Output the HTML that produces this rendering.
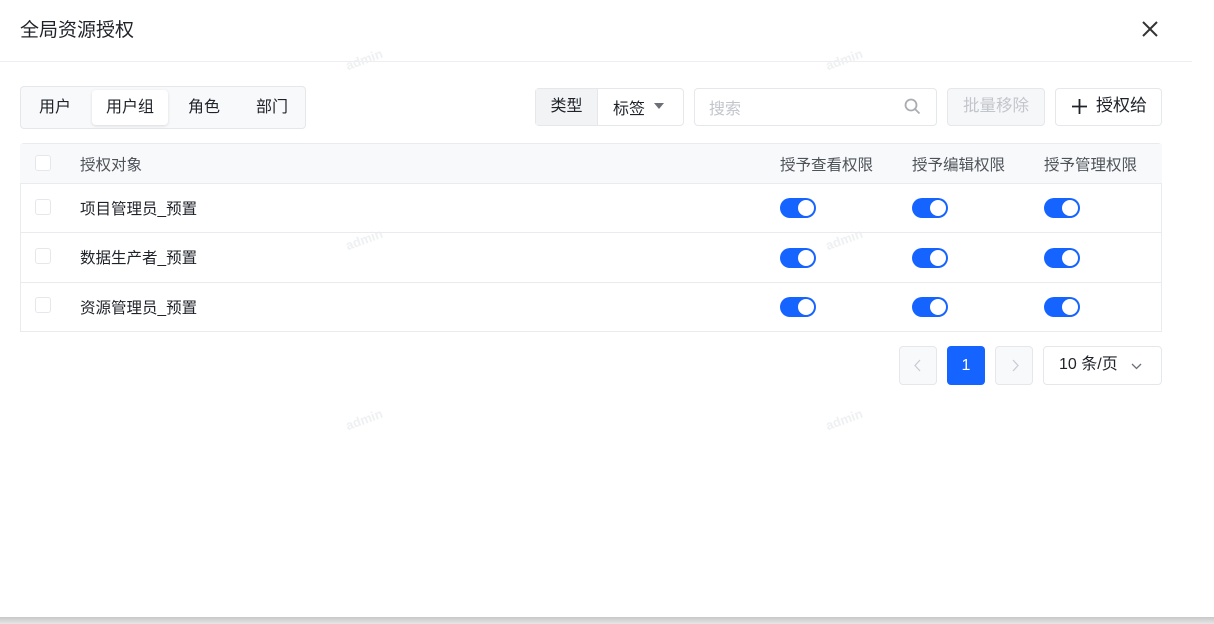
<!DOCTYPE html>
<html><head><meta charset="utf-8"><style>
*{box-sizing:border-box;margin:0;padding:0}
body{width:1214px;height:624px;background:#fff;font-family:"Liberation Sans","Noto Sans CJK SC",sans-serif;color:#1f2329;position:relative;overflow:hidden;font-size:14px}
.abs{position:absolute}
.title{left:20px;top:15px;font-size:19px;color:#1f2329}
.hline{left:0;top:61px;width:1192px;height:1px;background:#eceef1}
.wm{font-size:13px;color:#eef0f2;transform:rotate(-20deg);font-weight:bold}
.seg{left:20px;top:86px;width:286px;height:43px;border:1px solid #e5e7eb;border-radius:4px;background:#f8f9fb}
.seg span{position:absolute;top:6px;font-size:16px;color:#1f2329}
.seg .act{top:3px;left:71px;width:76px;height:35px;background:#fff;border-radius:4px;box-shadow:0 1px 3px rgba(0,0,0,.12);text-align:center;line-height:35px}
.box{border:1px solid #e5e7eb;border-radius:4px;background:#fff}
.tog{width:36px;height:20px;border-radius:10px;background:#1664ff;position:absolute}
.tog:after{content:"";position:absolute;right:2px;top:2px;width:16px;height:16px;border-radius:50%;background:#fff}
.cb{position:absolute;left:15px;width:16px;height:16px;border:1px solid #e5e7eb;border-radius:3px;background:#fff}
.row{position:absolute;left:20px;width:1142px;border-bottom:1px solid #e9ebef}
.row .t{position:absolute;left:60px;font-size:15.5px}
.h{position:absolute;top:9px;font-size:15.5px;color:#4e5358}
</style></head><body>
<div class="abs title">全局资源授权</div>
<svg class="abs" style="left:1141px;top:20px" width="18" height="18" viewBox="0 0 18 18"><path d="M2 2L16 16M16 2L2 16" stroke="#333" stroke-width="2"/></svg>
<div class="abs hline"></div>
<div class="abs wm" style="left:345px;top:52px">admin</div>
<div class="abs wm" style="left:825px;top:52px">admin</div>
<div class="abs wm" style="left:345px;top:232px">admin</div>
<div class="abs wm" style="left:825px;top:232px">admin</div>
<div class="abs wm" style="left:345px;top:412px">admin</div>
<div class="abs wm" style="left:825px;top:412px">admin</div>

<div class="abs seg"><span style="left:18px">用户</span><span class="act">用户组</span><span style="left:167px">角色</span><span style="left:235px">部门</span></div>

<div class="abs box" style="left:535px;top:88px;width:149px;height:38px"></div>
<div class="abs" style="left:536px;top:89px;width:62px;height:36px;background:#f2f3f5;border-right:1px solid #e5e7eb;font-size:16px;text-align:center;line-height:36px">类型</div>
<div class="abs" style="left:613px;top:95px;font-size:16px">标签</div>
<svg class="abs" style="left:654px;top:103px" width="10" height="6"><path d="M0 0H10L5 6Z" fill="#6b7078"/></svg>

<div class="abs box" style="left:694px;top:88px;width:243px;height:38px"></div>
<div class="abs" style="left:709px;top:95px;font-size:16px;color:#c2c6cc">搜索</div>
<svg class="abs" style="left:904px;top:98px" width="17" height="17" viewBox="0 0 17 17"><circle cx="7" cy="7" r="5.5" stroke="#a9adb3" stroke-width="1.8" fill="none"/><path d="M11 11L15.5 15.5" stroke="#a9adb3" stroke-width="1.8"/></svg>

<div class="abs box" style="left:947px;top:88px;width:98px;height:38px;background:#f6f7f9;color:#c2c6cc;font-size:16.5px;text-align:center;line-height:34px">批量移除</div>
<div class="abs box" style="left:1055px;top:88px;width:107px;height:38px;font-size:17px;line-height:34px;padding-left:40px">授权给</div>
<svg class="abs" style="left:1072px;top:99px" width="15" height="15"><path d="M7.5 0V15M0 7.5H15" stroke="#1f2329" stroke-width="1.8"/></svg>

<div class="abs" style="left:20px;top:143px;width:1142px;height:189px;border:1px solid #e9ebef;border-radius:4px 4px 0 0"></div>
<div class="row" style="top:144px;height:40px;background:#f8f9fb"><div class="cb" style="top:11px"></div><span class="t" style="top:9px;color:#4e5358">授权对象</span>
<span class="h" style="left:760px">授予查看权限</span>
<span class="h" style="left:892px">授予编辑权限</span>
<span class="h" style="left:1024px">授予管理权限</span></div>
<div class="row" style="top:184px;height:49px"><div class="cb" style="top:15px"></div><span class="t" style="top:13px">项目管理员_预置</span><div class="tog" style="left:760px;top:14px"></div><div class="tog" style="left:892px;top:14px"></div><div class="tog" style="left:1024px;top:14px"></div></div>
<div class="row" style="top:233px;height:50px"><div class="cb" style="top:15px"></div><span class="t" style="top:13px">数据生产者_预置</span><div class="tog" style="left:760px;top:15px"></div><div class="tog" style="left:892px;top:15px"></div><div class="tog" style="left:1024px;top:15px"></div></div>
<div class="row" style="top:283px;height:49px;border-bottom:none"><div class="cb" style="top:14px"></div><span class="t" style="top:13px">资源管理员_预置</span><div class="tog" style="left:760px;top:14px"></div><div class="tog" style="left:892px;top:14px"></div><div class="tog" style="left:1024px;top:14px"></div></div>

<div class="abs box" style="left:899px;top:346px;width:38px;height:39px;background:#f8f9fb"></div>
<svg class="abs" style="left:914px;top:359px" width="8" height="13"><path d="M6 1L1 6.5L6 12" stroke="#c9cdd4" stroke-width="1.3" fill="none"/></svg>
<div class="abs" style="left:947px;top:346px;width:38px;height:39px;background:#1664ff;border-radius:4px;color:#fff;text-align:center;line-height:39px;font-size:16px">1</div>
<div class="abs box" style="left:995px;top:346px;width:38px;height:39px;background:#f8f9fb"></div>
<svg class="abs" style="left:1011px;top:359px" width="8" height="13"><path d="M2 1L7 6.5L2 12" stroke="#c9cdd4" stroke-width="1.3" fill="none"/></svg>
<div class="abs box" style="left:1043px;top:346px;width:119px;height:39px;font-size:16px;line-height:35px;padding-left:15px">10 条/页</div>
<svg class="abs" style="left:1131px;top:363px" width="11" height="7"><path d="M1 1L5.5 5.5L10 1" stroke="#6b7078" stroke-width="1.3" fill="none"/></svg>

<div class="abs" style="left:0;top:617px;width:1214px;height:7px;background:linear-gradient(#c8c8c8,#e6e6e6)"></div>
</body></html>
